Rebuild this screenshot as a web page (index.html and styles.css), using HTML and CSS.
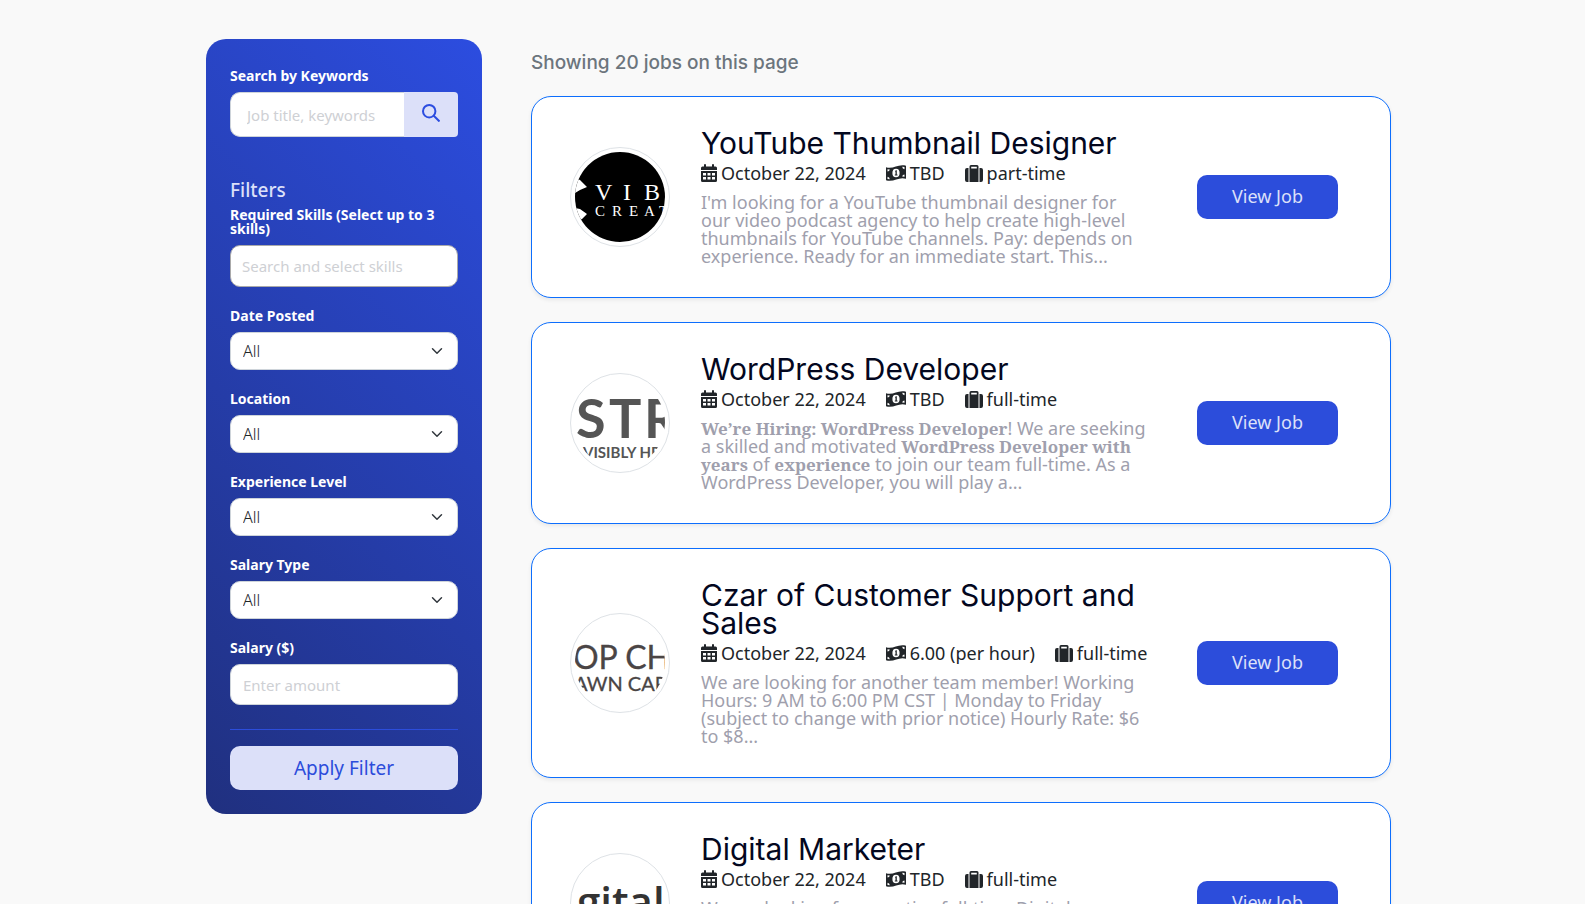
FILE: index.html
```
<!DOCTYPE html>
<html lang="en">
<head>
    <meta charset="UTF-8" />
    <title>Jobs</title>
    <link rel="stylesheet" href="styles.css">
</head>
<body>
    <!-- Shared icons -->
    <svg class="sprite" aria-hidden="true">
        <symbol id="icon-calendar" viewBox="0 0 16 18">
            <path d="M3 1q0-1 1-1t1 1v1.500h6V1q0-1 1-1t1 1v1.500h1.500q1.500 0 1.500 1.500V6H0V4q0-1.500 1.500-1.500H3z" />
            <path fill-rule="evenodd" d="M0 7h16v9.500q0 1.500-1.500 1.500h-13Q0 18 0 16.500zM2 9v2.500h3V9zM6.500 9v2.500h3V9zM11 9v2.500h3V9zM2 13v2.500h3V13zM6.500 13v2.500h3V13zM11 13v2.500h3V13z" />
        </symbol>
        <symbol id="icon-money" viewBox="0 0 20 16">
            <path fill-rule="evenodd" d="M0 2.200C7 4.800 12-1.500 20 .8v13C13 11.200 8 17.500 0 15.200zM10 3.700a3.600 4.300 0 1 0 0 8.600 3.600 4.300 0 1 0 0-8.600zM1.500 4.200v2.300q2-.1 2.300-2zM1.500 11.800v2.300l2.300.2q-.2-2.300-2.300-2.500zM18.500 4.200V1.900l-2.300-.2q.2 2.300 2.300 2.500zM18.500 11.800V9.500q-2 .1-2.300 2z" />
            <path d="M9 6l1-.8h.8V9.500h.7v1H8.800v-1h.7V6.500H9z" />
        </symbol>
        <symbol id="icon-suitcase" viewBox="0 0 18 17">
            <path fill-rule="evenodd" d="M4.500 17V1.500Q4.500 0 6 0h6q1.500 0 1.500 1.500V17zM6.200 1.700V3.500h5.600V1.700z" />
            <path d="M3.500 3v14H2Q0 17 0 15V5q0-2 2-2zM14.500 3H16q2 0 2 2v10q0 2-2 2h-1.500z" />
        </symbol>
    </svg>

    <div class="page">
        <aside class="sidebar">
            <form class="filters">
                <div class="field search-field">
                    <label for="keywords">Search by Keywords</label>
                    <div class="search-group">
                        <input type="text" id="keywords" name="keywords" placeholder="Job title, keywords" />
                        <button type="submit" class="search-button" aria-label="Search">
                            <svg viewBox="0 0 18 18" width="18" height="18"><circle cx="7.200" cy="7.200" r="6.200" /><path d="M11.500 11.500l6 6" /></svg>
                        </button>
                    </div>
                </div>

                <h2>Filters</h2>

                <div class="field">
                    <label for="skills">Required Skills (Select up to 3 skills)</label>
                    <input type="text" id="skills" name="skills" class="skills-input" placeholder="Search and select skills" />
                </div>
                <div class="field">
                    <label for="date-posted">Date Posted</label>
                    <select id="date-posted" name="datePosted"><option>All</option></select>
                </div>
                <div class="field">
                    <label for="location">Location</label>
                    <select id="location" name="location"><option>All</option></select>
                </div>
                <div class="field">
                    <label for="experience">Experience Level</label>
                    <select id="experience" name="experience"><option>All</option></select>
                </div>
                <div class="field">
                    <label for="salary-type">Salary Type</label>
                    <select id="salary-type" name="salaryType"><option>All</option></select>
                </div>
                <div class="field">
                    <label for="salary">Salary ($)</label>
                    <input type="text" id="salary" name="salary" placeholder="Enter amount" />
                </div>

                <hr>
                <button type="submit" class="apply-button">Apply Filter</button>
            </form>
        </aside>

        <main class="jobs">
            <p class="job-count">Showing 20 jobs on this page</p>

            <article class="job-card">
                <div class="logo">
                    <svg viewBox="0 0 90 90">
                        <rect width="90" height="90" fill="#000" />
                        <path d="M0 26l5 2 7 7-7 3-5 3zM0 56l5 1 7 5-5 5-7 3z" fill="#fff" />
                        <g font-family="Liberation Serif, serif" fill="#fff">
                            <text x="20" y="48" font-size="24">V</text>
                            <text x="48" y="48" font-size="24">I</text>
                            <text x="69" y="48" font-size="24">B</text>
                            <text x="20" y="64" font-size="15">C</text>
                            <text x="37" y="64" font-size="15">R</text>
                            <text x="54" y="64" font-size="15">E</text>
                            <text x="69" y="64" font-size="15">A</text>
                            <text x="84" y="64" font-size="15">T</text>
                        </g>
                    </svg>
                </div>
                <div class="job-info">
                    <h3>YouTube Thumbnail Designer</h3>
                    <ul class="job-meta">
                        <li><svg width="16" height="18"><use href="#icon-calendar" /></svg>October 22, 2024</li>
                        <li><svg width="20" height="16"><use href="#icon-money" /></svg>TBD</li>
                        <li><svg width="18" height="17"><use href="#icon-suitcase" /></svg>part-time</li>
                    </ul>
                    <p>I'm looking for a YouTube thumbnail designer for our video podcast agency to help create high-level thumbnails for YouTube channels. Pay: depends on experience. Ready for an immediate start. This...</p>
                </div>
                <a href="#" class="view-button">View Job</a>
            </article>

            <article class="job-card">
                <div class="logo">
                    <svg viewBox="0 0 90 90">
                        <g font-family="Lato, sans-serif" font-weight="700" fill="#555">
                            <text x="1" y="60" font-size="54">S</text>
                            <text x="34" y="60" font-size="54">T</text>
                            <text x="69" y="60" font-size="54">R</text>
                            <text x="8" y="80" font-size="15">VISIBLY HR</text>
                        </g>
                    </svg>
                </div>
                <div class="job-info">
                    <h3>WordPress Developer</h3>
                    <ul class="job-meta">
                        <li><svg width="16" height="18"><use href="#icon-calendar" /></svg>October 22, 2024</li>
                        <li><svg width="20" height="16"><use href="#icon-money" /></svg>TBD</li>
                        <li><svg width="18" height="17"><use href="#icon-suitcase" /></svg>full-time</li>
                    </ul>
                    <p><strong>We’re Hiring: WordPress Developer</strong>! We are seeking a skilled and motivated <strong>WordPress Developer with years</strong> of <strong>experience</strong> to join our team full-time. As a WordPress Developer, you will play a...</p>
                </div>
                <a href="#" class="view-button">View Job</a>
            </article>

            <article class="job-card">
                <div class="logo">
                    <svg viewBox="0 0 90 90">
                        <g font-family="Lato, sans-serif" fill="#4a4545" stroke="#4a4545" stroke-width=".3">
                            <text x="-2" y="51" font-size="32">OP CH</text>
                            <text x="-1" y="73" font-size="20">AWN CARE</text>
                        </g>
                    </svg>
                </div>
                <div class="job-info">
                    <h3>Czar of Customer Support and Sales</h3>
                    <ul class="job-meta">
                        <li><svg width="16" height="18"><use href="#icon-calendar" /></svg>October 22, 2024</li>
                        <li><svg width="20" height="16"><use href="#icon-money" /></svg>6.00 (per hour)</li>
                        <li><svg width="18" height="17"><use href="#icon-suitcase" /></svg>full-time</li>
                    </ul>
                    <p>We are looking for another team member! Working Hours: 9 AM to 6:00 PM CST | Monday to Friday (subject to change with prior notice) Hourly Rate: $6 to $8...</p>
                </div>
                <a href="#" class="view-button">View Job</a>
            </article>

            <article class="job-card">
                <div class="logo">
                    <svg viewBox="0 0 90 90">
                        <text x="2" y="59" font-family="Open Sans, sans-serif" font-weight="600" font-size="42" fill="#333">gital</text>
                    </svg>
                </div>
                <div class="job-info">
                    <h3>Digital Marketer</h3>
                    <ul class="job-meta">
                        <li><svg width="16" height="18"><use href="#icon-calendar" /></svg>October 22, 2024</li>
                        <li><svg width="20" height="16"><use href="#icon-money" /></svg>TBD</li>
                        <li><svg width="18" height="17"><use href="#icon-suitcase" /></svg>full-time</li>
                    </ul>
                    <p>We are looking for an active full-time Digital Marketer to join our growing team. You will plan and run campaigns across our channels and report on results. The ideal candidate has experience with...</p>
                </div>
                <a href="#" class="view-button">View Job</a>
            </article>
        </main>
    </div>
</body>
</html>
```
FILE: styles.css
```
* {
    margin: 0;
    padding: 0;
    box-sizing: border-box;
}

body {
    font-family: 'Noto Sans', 'Open Sans', sans-serif;
    background-color: #f9f9f9;
    color: #212529;
}

.sprite {
    display: none;
}

.page {
    display: flex;
    align-items: flex-start;
    gap: 49px;
    max-width: 1197px;
    margin: 0 auto;
    padding: 39px 0 24px 12px;
}

/* Sidebar */
.sidebar {
    flex: 0 0 276px;
    padding: 30px 24px 24px;
    border-radius: 20px;
    background: linear-gradient(45deg, #20307f, #2c4de0);
}

.field {
    margin-bottom: 22px;
}

.search-field {
    margin-bottom: 41px;
}

.sidebar h2 {
    margin-bottom: 6px;
    font-size: 19px;
    font-weight: 500;
    line-height: 24px;
    color: #dce0f9;
}

label {
    display: block;
    margin-bottom: 9px;
    font-size: 14px;
    font-weight: 700;
    line-height: 14px;
    color: white;
}

input,
select {
    display: block;
    width: 100%;
    border: 1px solid #ced4da;
    border-radius: 10px;
    background-color: white;
    font-family: inherit;
    color: #212529;
}

input {
    height: 41px;
    padding: 0 12px;
    font-size: 15px;
}

input::placeholder {
    color: #ced0d4;
}

.skills-input {
    height: 42px;
    padding: 0 11px;
    border-color: #aaa;
}

select {
    height: 38px;
    padding: 0 12px;
    font-size: 16px;
    font-weight: 300;
    appearance: none;
    background-image: url("data:image/svg+xml,%3csvg xmlns='http://www.w3.org/2000/svg' viewBox='0 0 16 16'%3e%3cpath fill='none' stroke='%23343a40' stroke-linecap='round' stroke-linejoin='round' stroke-width='2' d='m2 5 6 6 6-6'/%3e%3c/svg%3e");
    background-repeat: no-repeat;
    background-position: right 14px center;
    background-size: 12px;
}

.search-group {
    display: flex;
}

.search-group input {
    flex: 1;
    min-width: 0;
    height: 45px;
    padding: 0 16px;
    border-right: none;
    border-radius: 10px 0 0 10px;
}

.search-button {
    width: 54px;
    padding-bottom: 3px;
    border: none;
    border-radius: 0 4px 4px 0;
    background-color: #dce0f9;
    cursor: pointer;
}

.search-button svg {
    vertical-align: middle;
    fill: none;
    stroke: #2c4de0;
    stroke-width: 2;
}

hr {
    margin: 24px 0 16px;
    border: none;
    border-top: 1px solid #2c4ddb;
}

.apply-button {
    width: 100%;
    height: 44px;
    border: none;
    border-radius: 10px;
    background-color: #dce0f9;
    font-family: inherit;
    font-size: 19px;
    color: #2c4ddb;
    cursor: pointer;
}

/* Job list */
.jobs {
    flex: 1;
}

.job-count {
    margin: 12px 0 21px;
    font-family: 'Inter', sans-serif;
    font-size: 19px;
    font-weight: 500;
    line-height: 24px;
    color: #6c757d;
}

.job-card {
    display: grid;
    grid-template-columns: 100px 1fr 141px;
    align-items: center;
    margin-bottom: 24px;
    padding: 32px 52px 32px 38px;
    border: 1px solid #0d6efd;
    border-radius: 20px;
    background-color: white;
    box-shadow: 0 2px 4px rgba(0, 0, 0, 0.075);
}

.logo {
    height: 100px;
    padding: 4px;
    border: 1px solid #dee2e6;
    border-radius: 50%;
}

.logo svg {
    display: block;
    width: 90px;
    height: 90px;
    border-radius: 50%;
}

.job-info {
    padding: 0 47px 0 31px;
}

.job-info h3 {
    font-family: 'Inter', sans-serif;
    font-size: 30px;
    font-weight: 400;
    line-height: 28px;
    color: #03071e;
}

.job-meta {
    display: flex;
    gap: 20px;
    margin: 6px 0 10px;
    list-style: none;
    font-size: 18px;
    line-height: 20px;
    white-space: nowrap;
}

.job-meta li {
    display: flex;
    align-items: center;
    gap: 4px;
}

.job-meta svg {
    fill: #212529;
}

.job-info p {
    font-size: 18px;
    line-height: 18px;
    color: #9f9fad;
}

.job-info strong {
    font-family: 'Noto Serif', 'DejaVu Serif Condensed', 'DejaVu Serif', serif;
    font-size: 17px;
    line-height: 1px; /* Keeps the serif words from stretching the line */
}

.view-button {
    height: 44px;
    border-radius: 10px;
    background-color: #2c4ddb;
    font-size: 18px;
    line-height: 42px;
    text-align: center;
    text-decoration: none;
    color: #dce0f9;
}
```
